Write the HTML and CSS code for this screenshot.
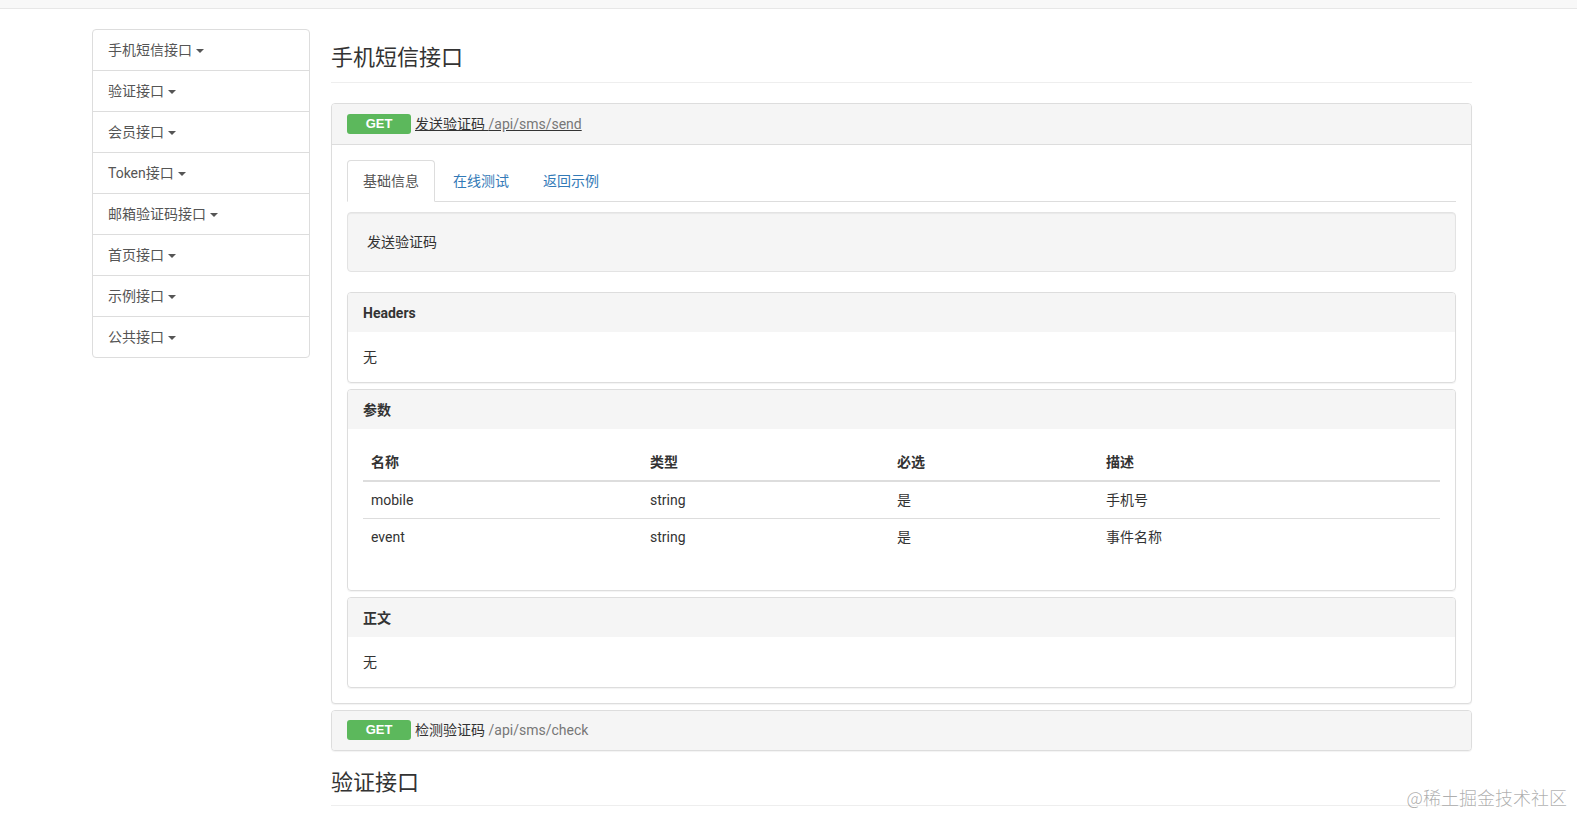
FILE: index.html
```html
<!DOCTYPE html>
<html lang="zh-CN">
<head>
<meta charset="utf-8">
<title>API文档</title>
<link rel="stylesheet" href="styles.css">
</head>
<body>
<div class="topbar"></div>
<div class="container">
  <aside class="sidebar">
    <ul class="list-group">
      <li class="list-item">手机短信接口<span class="caret"></span></li>
      <li class="list-item">验证接口<span class="caret"></span></li>
      <li class="list-item">会员接口<span class="caret"></span></li>
      <li class="list-item">Token接口<span class="caret"></span></li>
      <li class="list-item">邮箱验证码接口<span class="caret"></span></li>
      <li class="list-item">首页接口<span class="caret"></span></li>
      <li class="list-item">示例接口<span class="caret"></span></li>
      <li class="list-item">公共接口<span class="caret"></span></li>
    </ul>
  </aside>
  <main class="main">
    <h2 class="page-header first">手机短信接口</h2>
    <div class="panel-group">
      <div class="panel">
        <div class="panel-heading api-heading">
          <span class="badge-get">GET</span>
          <a class="api-link underline"><span class="api-title">发送验证码</span> <span class="api-path">/api/sms/send</span></a>
        </div>
        <div class="panel-body">
          <ul class="tabs">
            <li class="tab active">基础信息</li>
            <li class="tab">在线测试</li>
            <li class="tab">返回示例</li>
          </ul>
          <div class="well">发送验证码</div>
          <div class="sub-panel">
            <div class="sub-heading">Headers</div>
            <div class="sub-body">无</div>
          </div>
          <div class="sub-panel">
            <div class="sub-heading">参数</div>
            <div class="sub-body">
              <table class="table">
                <thead>
                  <tr>
                    <th class="c-name">名称</th>
                    <th class="c-type">类型</th>
                    <th class="c-req">必选</th>
                    <th class="c-desc">描述</th>
                  </tr>
                </thead>
                <tbody>
                  <tr>
                    <td>mobile</td>
                    <td>string</td>
                    <td>是</td>
                    <td>手机号</td>
                  </tr>
                  <tr>
                    <td>event</td>
                    <td>string</td>
                    <td>是</td>
                    <td>事件名称</td>
                  </tr>
                </tbody>
              </table>
            </div>
          </div>
          <div class="sub-panel">
            <div class="sub-heading">正文</div>
            <div class="sub-body">无</div>
          </div>
        </div>
      </div>
      <div class="panel">
        <div class="panel-heading api-heading solo">
          <span class="badge-get">GET</span>
          <a class="api-link"><span class="api-title">检测验证码</span> <span class="api-path">/api/sms/check</span></a>
        </div>
      </div>
    </div>
    <h2 class="page-header">验证接口</h2>
  </main>
</div>
<div class="watermark">@稀土掘金技术社区</div>
</body>
</html>
```

FILE: styles.css
```css
* {
  box-sizing: border-box;
}

html, body {
  margin: 0;
  padding: 0;
  background: #fff;
  overflow: hidden;
}

body {
  font-family: Roboto, "Noto Sans CJK SC", sans-serif;
  font-size: 14px;
  line-height: 20px;
  color: #333;
  height: 814px;
}

.topbar {
  height: 9px;
  background: #f8f8f8;
  border-bottom: 1px solid #e7e7e7;
}

.container {
  display: flex;
  align-items: flex-start;
  padding: 20px 0 0 92px;
  gap: 21px;
}

.sidebar {
  width: 218px;
  flex: none;
}

.list-group {
  list-style: none;
  margin: 0;
  padding: 0;
}

.list-item {
  display: flex;
  align-items: center;
  padding: 10px 15px;
  height: 42px;
  margin-bottom: -1px;
  border: 1px solid #ddd;
  background: #fff;
  color: #555;
}

.list-item:first-child {
  border-radius: 4px 4px 0 0;
}

.list-item:last-child {
  border-radius: 0 0 4px 4px;
}

.caret {
  display: inline-block;
  width: 0;
  height: 0;
  margin-left: 4px;
  margin-top: 1px;
  border-top: 4px solid #555;
  border-left: 4px solid transparent;
  border-right: 4px solid transparent;
}

.main {
  width: 1141px;
  flex: none;
}

.page-header {
  margin: 20px 0 0;
  padding-bottom: 10px;
  border-bottom: 1px solid #eee;
  font-size: 22px;
  line-height: 24px;
  font-weight: 400;
  color: #333;
}

.page-header.first {
  margin-top: 17px;
  padding-bottom: 12px;
  margin-bottom: 20px;
}

.panel-group {
  display: flex;
  flex-direction: column;
  gap: 6px;
}

.panel {
  border: 1px solid #ddd;
  border-radius: 4px;
  background: #fff;
  box-shadow: 0 1px 1px rgba(0, 0, 0, 0.05);
}

.panel-heading {
  background: #f5f5f5;
  border-bottom: 1px solid #ddd;
  border-radius: 3px 3px 0 0;
  padding: 10px 15px;
  height: 41px;
}

.panel-heading.solo {
  border-bottom: none;
  border-radius: 3px;
  height: 39px;
  padding-top: 9px;
}

.api-heading {
  display: flex;
  align-items: center;
}

.badge-get {
  display: inline-block;
  width: 64px;
  height: 20px;
  line-height: 20px;
  background: #5cb85c;
  color: #fff;
  border-radius: 3px;
  text-align: center;
  font-family: "Liberation Sans", Arial, sans-serif;
  font-size: 13px;
  font-weight: 700;
  margin-right: 4px;
}

.api-link {
  color: #333;
  white-space: pre;
}

.api-link.underline {
  text-decoration: underline;
  text-decoration-color: #333;
}

.api-path {
  color: #777;
}

.panel-body {
  padding: 15px 15px 15px;
}

.tabs {
  list-style: none;
  margin: 0;
  padding: 0;
  display: flex;
  gap: 2px;
  border-bottom: 1px solid #ddd;
}

.tab {
  padding: 10px 15px;
  border: 1px solid transparent;
  border-radius: 4px 4px 0 0;
  margin-bottom: -1px;
  color: #337ab7;
}

.tab.active {
  color: #555;
  background: #fff;
  border-color: #ddd #ddd transparent;
}

.well {
  margin: 10px 0 20px;
  padding: 19px;
  background: #f5f5f5;
  border: 1px solid #e3e3e3;
  border-radius: 4px;
  box-shadow: inset 0 1px 1px rgba(0, 0, 0, 0.05);
}

.sub-panel {
  border: 1px solid #ddd;
  border-radius: 4px;
  margin-bottom: 6px;
  box-shadow: 0 1px 1px rgba(0, 0, 0, 0.05);
}

.sub-panel:last-child {
  margin-bottom: 0;
}

.sub-heading {
  background: #f5f5f5;
  padding: 10px 15px 9px;
  border-radius: 3px 3px 0 0;
  font-weight: 700;
  color: #333;
}

.sub-body {
  padding: 15px;
}

.table {
  width: 100%;
  border-collapse: collapse;
  margin-bottom: 20px;
}

.table th,
.table td {
  text-align: left;
  padding: 8px;
  vertical-align: top;
}

.table th {
  font-weight: 700;
  border-bottom: 2px solid #ddd;
}

.table td {
  border-top: 1px solid #ddd;
}

.table tbody tr:first-child td {
  border-top: none;
}

.c-name {
  width: 279px;
}

.c-type {
  width: 247px;
}

.c-req {
  width: 209px;
}

.watermark {
  position: absolute;
  right: 10px;
  bottom: 6px;
  font-family: "Noto Sans CJK SC", sans-serif;
  font-size: 18px;
  line-height: 22px;
  font-weight: 300;
  color: rgba(120, 120, 120, 0.6);
}
```
